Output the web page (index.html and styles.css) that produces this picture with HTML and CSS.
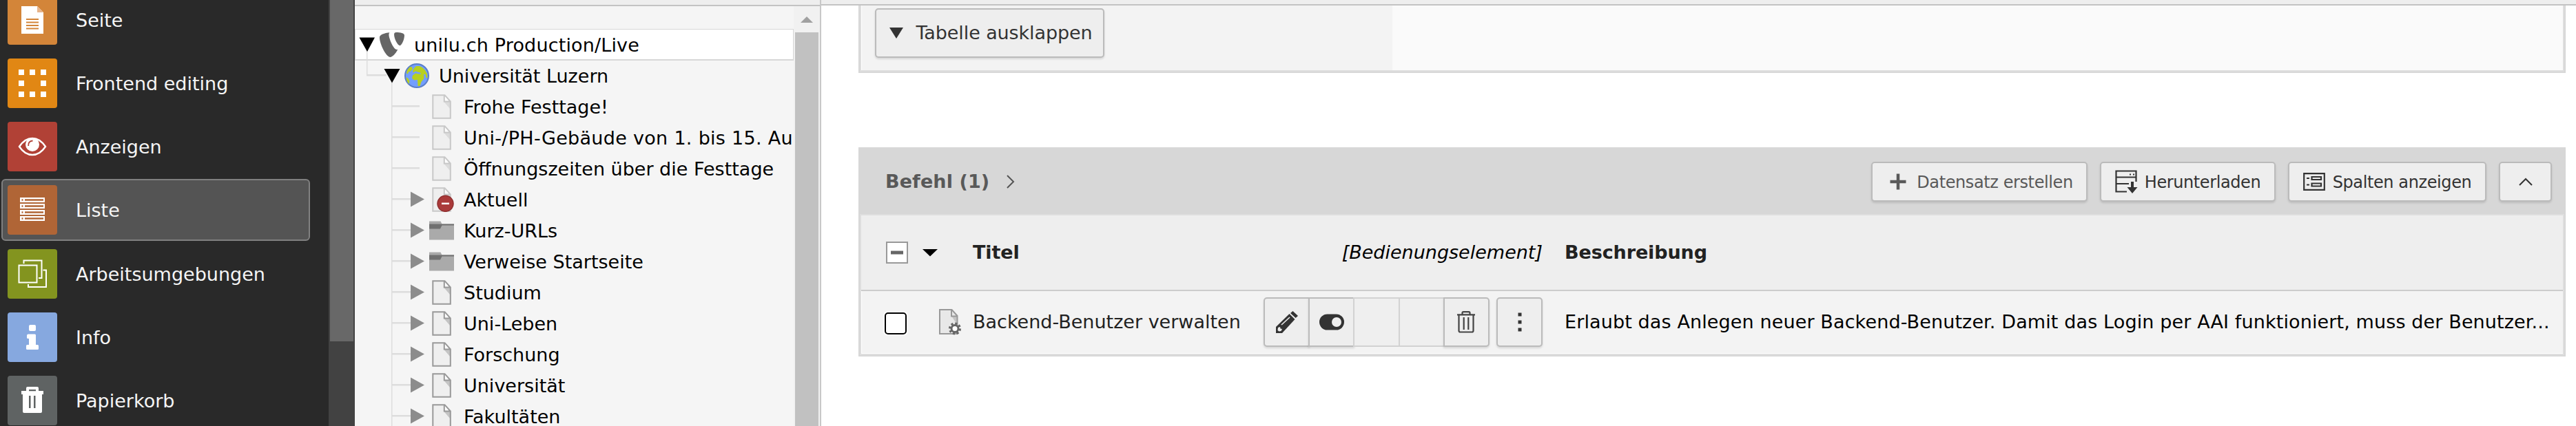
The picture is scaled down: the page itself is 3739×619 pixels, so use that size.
FILE: index.html
```html
<!DOCTYPE html>
<html lang="de">
<head>
    <meta charset="utf-8">
    <title>unilu.ch Production/Live</title>
    <link rel="stylesheet" href="styles.css">
</head>
<body>
    <!-- Icons -->
    <svg class="sprite" aria-hidden="true">
        <symbol id="page" viewBox="0 0 36 36">
            <path d="M5 1h17l9 10v24H5z" fill="#efefef"/>
            <path d="M21 10.500h10v11.500z" fill="currentColor" opacity=".5"/>
            <path d="M22 1l9 9.500h-9z" fill="#fff"/>
            <path d="M5.300 1.200H22.500l8.300 9.300v24.200H5.300z M21.800 1.200v9.300h9" fill="none" stroke="currentColor" stroke-width="2"/>
        </symbol>
        <symbol id="folder" viewBox="0 0 36 36">
            <path d="M0 4.500h16.500l2 4H36v23H0z" fill="#aaa"/>
            <path d="M0 8.500h36v2H18.500l-2.500 5H0z" fill="#707070"/>
        </symbol>
        <symbol id="leaf" viewBox="0 0 55 45">
            <path d="M0 0h1.500v45H0zM0 21h41v2.500H0z" fill="#ddd"/>
        </symbol>
        <symbol id="closed" viewBox="0 0 55 45">
            <path d="M0 0h1.500v45H0zM0 21h30v2.500H0z" fill="#ddd"/>
            <path d="M28 11.500l20 11-20 11z" fill="#8c8c8c"/>
        </symbol>
        <symbol id="trash" viewBox="0 0 26 32">
            <path d="M0 5.300h26M7.500 5V2.800q0-1.600 1.600-1.600h7.800q1.600 0 1.600 1.600V5M2.500 6v22.500q0 2 2 2h17q2 0 2-2V6M9.700 9v18M16.300 9v18" fill="none" stroke="#444" stroke-width="2.200"/>
        </symbol>
    </svg>

    <div class="app">
        <!-- Modulmenü -->
        <nav class="menu">
            <ul class="menu-list">
                <li class="menu-item">
                    <svg class="menu-icon" viewBox="0 0 72 72"><rect width="72" height="72" rx="4" fill="#d38539"/><path d="M20 16h23l9 9v31H20z" fill="#fff"/><path d="M43 16l9 9h-9z" fill="#e7b48a"/><path d="M27 35h18M27 39.500h18M27 44h18M27 48.500h18" stroke="#d38539" stroke-width="2"/></svg>
                    <span>Seite</span>
                </li>
                <li class="menu-item">
                    <svg class="menu-icon" viewBox="0 0 72 72"><rect width="72" height="72" rx="4" fill="#e18714"/><path d="M16 16h8v8h-8zM32 16h8v8h-8zM48 16h8v8h-8zM16 32h8v8h-8zM48 32h8v8h-8zM16 48h8v8h-8zM32 48h8v8h-8zM48 48h8v8h-8z" fill="#fff"/></svg>
                    <span>Frontend editing</span>
                </li>
                <li class="menu-item">
                    <svg class="menu-icon" viewBox="0 0 72 72"><rect width="72" height="72" rx="4" fill="#b14136"/><path d="M17 36Q25 24 36 24T55 36Q47 48 36 48T17 36z" fill="none" stroke="#fff" stroke-width="2.400"/><circle cx="36" cy="33" r="10" fill="#fff"/><path d="M30.200 35q-.5-7 6.300-7.500" fill="none" stroke="#b14136" stroke-width="1.800"/></svg>
                    <span>Anzeigen</span>
                </li>
                <li class="menu-item active">
                    <svg class="menu-icon" viewBox="0 0 72 72"><rect width="72" height="72" rx="4" fill="#b06536"/><path d="M18 18h36v7H18zM18 27h36v7H18zM18 36h36v7H18zM18 45h36v7H18z" fill="#fff"/><path d="M20.500 21.500h2M25 21.500h27M20.500 30.500h2M25 30.500h27M20.500 39.500h2M25 39.500h27M20.500 48.500h2M25 48.500h27" stroke="#b06536" stroke-width="2.300"/></svg>
                    <span>Liste</span>
                </li>
                <li class="menu-item">
                    <svg class="menu-icon" viewBox="0 0 72 72"><rect width="72" height="72" rx="4" fill="#83941f"/><path d="M16.500 23.500h26v25h-26zM23.500 21v-4.500h26v25.500H45M51.500 30.500h4.500V55H30v-4" fill="none" stroke="#fff" stroke-width="2"/></svg>
                    <span>Arbeitsumgebungen</span>
                </li>
                <li class="menu-item">
                    <svg class="menu-icon" viewBox="0 0 72 72"><rect width="72" height="72" rx="4" fill="#86a8df"/><rect x="31" y="18" width="10" height="9" rx="2" fill="#fff"/><path d="M30 31.500h9.500q1.500 0 1.500 1.500v14h2.500q1.500 0 1.500 1.500v4q0 1.500-1.500 1.500h-15q-1.500 0-1.500-1.500v-4q0-1.500 1.500-1.500H31v-9h-1.500q-1.500 0-1.500-1.500V33.500q0-2 2-2z" fill="#fff"/></svg>
                    <span>Info</span>
                </li>
                <li class="menu-item">
                    <svg class="menu-icon" viewBox="0 0 72 72"><rect width="72" height="72" rx="4" fill="#5f6363"/><path d="M27 22v-4q0-2 2-2h14q2 0 2 2v4h7v5h-2v25q0 2-2 2H24q-2 0-2-2V27h-2v-5z" fill="#fff"/><path d="M31 20h10v2.300H31zM31 29h2.500v18H31zM38 29h2.500v18H38z" fill="#5f6363"/></svg>
                    <span>Papierkorb</span>
                </li>
            </ul>
            <div class="menu-scroll"><div class="menu-thumb"></div></div>
        </nav>

        <!-- Seitenbaum -->
        <aside class="tree">
            <div class="tree-toolbar"></div>
            <div class="tree-body">
                <div class="tree-list">
                    <div class="node root">
                        <svg width="36" height="45" viewBox="0 0 36 45"><path d="M17 30h1.500v15H17z" fill="#ddd"/><path d="M6.500 12.500H29L18 33z"/></svg>
                        <svg class="node-icon" viewBox=".7 .5 14.200 14.200" preserveAspectRatio="none"><path fill="#666" d="M11.100 10.300c-.2 0-.4.1-.6.1-1.800 0-4.500-6.400-4.500-8.500 0-.8.2-1 .4-1.300C4.200.8 1.800 1.500 1 2.500c-.2.3-.3.6-.3 1.100 0 3.400 3.600 11.100 6.100 11.100 1.200 0 3.100-1.900 4.300-4.400M10.200.5c2.300 0 4.700.4 4.700 1.700 0 2.700-1.700 5.900-2.500 5.900-1.500 0-3.400-4.200-3.400-6.300 0-1 .4-1.300 1.200-1.300"/></svg>
                        <span>unilu.ch Production/Live</span>
                    </div>
                    <div class="node">
                        <svg width="72" height="45" viewBox="0 0 72 45"><path d="M17 0h1.500v21H46v2.500H17zM53 30h1.500v15H53z" fill="#ddd"/><path d="M42.500 13H65.500L54 33.500z"/></svg>
                        <svg class="node-icon" viewBox="0 0 36 36"><circle cx="18" cy="18" r="17" fill="#739eff" stroke="#5b7fc9" stroke-width="2"/><path d="M4 10l4-5 3 .5 1 3-3 3-3 1-1 3-2-1zM2.500 20l3 2 2 4-1 4q-3.500-4-4-10zM14 7l3-3 5 0 4 2 4 4 3 5 .5 6-2 0-1-5-2.500 0 .5 6-4 5-2 6-3 0-.5-9-5 .5-3-3 1-4 4-3 5 1 3 0-1-2-4-1-3-1-3 2-1-2z" fill="#b8d020"/></svg>
                        <span>Universität Luzern</span>
                    </div>
                    <div class="node child hidden"><svg class="line"><use href="#leaf"/></svg><svg class="node-icon"><use href="#page"/></svg><span>Frohe Festtage!</span></div>
                    <div class="node child hidden wide"><svg class="line"><use href="#leaf"/></svg><svg class="node-icon"><use href="#page"/></svg><span>Uni-/PH-Gebäude von 1. bis 15. Au</span></div>
                    <div class="node child hidden"><svg class="line"><use href="#leaf"/></svg><svg class="node-icon"><use href="#page"/></svg><span>Öffnungszeiten über die Festtage</span></div>
                    <div class="node child hidden"><svg class="line"><use href="#closed"/></svg><svg class="node-icon"><use href="#page"/><circle cx="23.500" cy="23.800" r="11.500" fill="#aa3a3a" stroke="#8f3030" stroke-width="1.500"/><path d="M18 23.800h11" stroke="#fff" stroke-width="2.500"/></svg><span>Aktuell</span></div>
                    <div class="node child"><svg class="line"><use href="#closed"/></svg><svg class="node-icon"><use href="#folder"/></svg><span>Kurz-URLs</span></div>
                    <div class="node child"><svg class="line"><use href="#closed"/></svg><svg class="node-icon"><use href="#folder"/></svg><span>Verweise Startseite</span></div>
                    <div class="node child"><svg class="line"><use href="#closed"/></svg><svg class="node-icon"><use href="#page"/></svg><span>Studium</span></div>
                    <div class="node child"><svg class="line"><use href="#closed"/></svg><svg class="node-icon"><use href="#page"/></svg><span>Uni-Leben</span></div>
                    <div class="node child"><svg class="line"><use href="#closed"/></svg><svg class="node-icon"><use href="#page"/></svg><span>Forschung</span></div>
                    <div class="node child"><svg class="line"><use href="#closed"/></svg><svg class="node-icon"><use href="#page"/></svg><span>Universität</span></div>
                    <div class="node child"><svg class="line"><use href="#closed"/></svg><svg class="node-icon"><use href="#page"/></svg><span>Fakultäten</span></div>
                </div>
                <div class="tree-scroll">
                    <svg width="38" height="38" viewBox="0 0 38 38"><path d="M19 15l9 9H10z" fill="#a0a0a0"/></svg>
                    <div class="tree-thumb"></div>
                </div>
            </div>
        </aside>

        <!-- Listenmodul -->
        <main class="content">
            <div class="docheader"></div>

            <div class="panel panel-top">
                <div class="cell-expand">
                    <button class="btn btn-expand"><svg width="20" height="16" viewBox="0 0 20 16"><path d="M0 0h20L10 16z" fill="#333"/></svg>Tabelle ausklappen</button>
                </div>
            </div>

            <div class="panel panel-list">
                <div class="panel-heading">
                    <h2>Befehl (1)</h2>
                    <svg class="heading-arrow" width="12" height="20" viewBox="0 0 12 20"><path d="M1 1l9 9-9 9" fill="none" stroke="#555" stroke-width="2"/></svg>
                    <div class="actions">
                        <button class="btn btn-new"><svg width="24" height="24" viewBox="0 0 24 24"><path d="M12 .5v23M.5 12h23" stroke="#595959" stroke-width="4.500"/></svg><span>Datensatz erstellen</span></button>
                        <button class="btn btn-download"><svg width="34" height="34" viewBox="0 0 34 34"><path d="M17 31.500H1.500V1.500h29V17M1.500 10.500h29M1.500 20H20M21 6.500h2M26 6.500h2" fill="none" stroke="#333" stroke-width="2.200"/><path d="M23 17h4v8h5.500L25 34l-7.500-9H23z" fill="#333"/></svg><span>Herunterladen</span></button>
                        <button class="btn btn-columns"><svg width="32" height="26" viewBox="0 0 32 26"><path d="M1.200 1.200h29.600v23.600H1.200zM12.500 6h13.500v4H12.500zM12.500 15.500h13.500v4H12.500zM5 8h4M5 17.500h4" fill="none" stroke="#333" stroke-width="2.200"/></svg><span>Spalten anzeigen</span></button>
                        <button class="btn btn-collapse"><svg width="20" height="12" viewBox="0 0 20 12"><path d="M1 11l9-9 9 9" fill="none" stroke="#333" stroke-width="2"/></svg></button>
                    </div>
                </div>

                <div class="table">
                    <div class="row row-head">
                        <div class="col-select">
                            <svg width="75" height="32" viewBox="0 0 75 32"><rect x="1" y="1" width="30" height="30" fill="#fff" stroke="#999" stroke-width="2"/><path d="M7 16h18" stroke="#666" stroke-width="5"/><path d="M53 11h22L64 21.500z"/></svg>
                        </div>
                        <div class="col-title"><b>Titel</b><i>[Bedienungselement]</i></div>
                        <div class="col-text"><b>Beschreibung</b></div>
                    </div>
                    <div class="row row-record">
                        <div class="col-select">
                            <span class="checkbox"></span>
                            <svg width="34" height="38" viewBox="0 0 34 38"><path d="M1 1h18l8 9v26H1z" fill="#e8e8e8"/><path d="M18 10h9v14z" fill="#c4c4c4"/><path d="M1 1h17.500l8 9v26H1zM18 1v9.500h8.500" fill="none" stroke="#999" stroke-width="2"/><circle cx="23" cy="28.500" r="7.300" fill="none" stroke="#666" stroke-width="3.500" stroke-dasharray="3 2.730"/><circle cx="23" cy="28.500" r="5" fill="#fff" stroke="#666" stroke-width="3"/></svg>
                        </div>
                        <div class="col-title">
                            <span class="record-title">Backend-Benutzer verwalten</span>
                            <div class="controls">
                                <div class="btn-group">
                                    <button class="btn"><svg width="32" height="32" viewBox="0 0 32 32"><path d="M0 32v-9L19.500 4l8 8L9 32z" fill="#333"/><path d="M24.500 0L32 7l-3.500 3L21 3z" fill="#333"/><path d="M8 20L20 9" stroke="#eee" stroke-width="1.600"/><path d="M3 24l3-1 .5 2.500 2.500.5-1.500 3-3 .5L2.500 28z" fill="#eee"/></svg></button>
                                    <button class="btn"><svg width="36" height="24" viewBox="0 0 36 24"><rect y="0.500" width="36" height="23" rx="11.500" fill="#333"/><circle cx="25" cy="12" r="7" fill="#eee"/></svg></button>
                                    <span class="btn empty"></span>
                                    <span class="btn empty"></span>
                                    <button class="btn last"><svg width="26" height="32"><use href="#trash"/></svg></button>
                                </div>
                                <button class="btn more"><svg width="6" height="28" viewBox="0 0 6 28"><path d="M.5.5h5v5h-5zM.5 11.500h5v5h-5zM.5 22.500h5v5h-5z" fill="#333"/></svg></button>
                            </div>
                        </div>
                        <div class="col-text">Erlaubt das Anlegen neuer Backend-Benutzer. Damit das Login per AAI funktioniert, muss der Benutzer...</div>
                    </div>
                </div>
            </div>
        </main>
    </div>
</body>
</html>
```
FILE: styles.css
```css
* {
    box-sizing: border-box;
}

body {
    margin: 0;
    font-family: Verdana, "DejaVu Sans", sans-serif;
    font-size: 27px;
    line-height: 36px;
    color: #000;
    background: #fff;
    overflow: hidden;
}

svg {
    display: block;
    flex: none;
}

.sprite {
    display: none;
}

.app {
    display: flex;
    height: 619px;
    overflow: hidden;
}

/* ===== Modulmenü ===== */
.menu {
    display: flex;
    flex: none;
    width: 515px;
    background: #292929;
}

.menu-list {
    flex: 1;
    margin: -16px 0 0;
    padding: 0 27px 0 2px;
    list-style: none;
}

.menu-item {
    display: flex;
    align-items: center;
    height: 90px;
    margin-bottom: 2.150px;
    padding-left: 7px;
    border: 2px solid transparent;
    border-radius: 6px;
    color: #f5f5f5;
}

.menu-item span {
    padding-top: 2px;
}

.menu-item.active {
    background: #545454;
    border-color: #808080;
}

.menu-icon {
    width: 72px;
    height: 72px;
    margin-right: 27px;
}

.menu-scroll {
    width: 38px;
    padding: 0 2px;
    background: #424242;
}

.menu-thumb {
    height: 496px;
    background: #686868;
}

/* ===== Seitenbaum ===== */
.tree {
    flex: none;
    width: 677px;
    border-right: 2px solid #c8c8c8;
    background: #f5f5f5;
}

.tree-toolbar {
    height: 9px;
    background: #eee;
    border-bottom: 2px solid #c3c3c3;
}

.tree-body {
    display: flex;
    height: 610px;
}

.tree-list {
    flex: 1;
    min-width: 0;
    padding-top: 33px;
    overflow: hidden;
}

.node {
    display: flex;
    align-items: center;
    height: 45px;
    white-space: nowrap;
}

.node span {
    padding-top: 3px;
    line-height: 32px;
}

.node.root {
    background: #fff;
    box-shadow: inset 1px 1px #d7d7d7, inset -1px -1px #d7d7d7, 0 1px #d7d7d7;
    letter-spacing: 0.15px;
}

.node.wide {
    letter-spacing: 0.3px;
}

.node.child {
    padding-left: 53px;
}

.line {
    width: 55px;
    height: 45px;
}

.node-icon {
    width: 36px;
    height: 36px;
    margin-right: 14px;
    color: #999;
}

.hidden .node-icon {
    color: #c8c8c8;
}

.tree-scroll {
    width: 38px;
    background: #f1f1f1;
}

.tree-thumb {
    height: 572px;
    margin: 0 2px;
    background: #c1c1c1;
}

/* ===== Inhalt ===== */
.content {
    flex: 1;
}

.docheader {
    height: 8px;
    background: #eee;
    border-bottom: 2px solid #c3c3c3;
}

.panel {
    width: 2478px;
    margin-left: 54px;
    border: 2px solid #d7d7d7;
}

.panel-top {
    height: 98px;
    border-top: 0;
    background: #fafafa;
    box-shadow: inset 2px 0 #dedede, inset -2px -2px #dedede;
}

.cell-expand {
    width: 771px;
    height: 94px;
    margin-left: 2px;
    padding: 4px 0 0 19px;
    border-left: 1px solid #fff;
    background: #f3f3f3;
}

.btn {
    display: flex;
    align-items: center;
    justify-content: center;
    margin: 0;
    padding: 0;
    border: 2px solid #bbb;
    border-radius: 5px;
    background: #eee;
    color: #333;
    font: inherit;
    white-space: nowrap;
    box-shadow: 0 2px 3px rgba(0, 0, 0, 0.12);
}

.btn-expand {
    width: 333px;
    height: 72px;
    padding-left: 4px;
    gap: 18px;
    letter-spacing: -0.1px;
}

.panel-list {
    height: 304px;
    margin-top: 108px;
}

.panel-heading {
    display: flex;
    align-items: center;
    height: 95px;
    padding: 0 18px 0 37px;
    background: #d7d7d7;
    color: #595959;
}

.panel-heading h2 {
    margin: 0 25px 0 0;
    font-size: 27px;
    letter-spacing: 0.1px;
}

.actions {
    display: flex;
    gap: 18px;
    margin-left: auto;
}

.actions .btn {
    height: 58px;
    font-size: 24px;
    letter-spacing: -0.4px;
}

.actions .btn span {
    padding-top: 3px;
}

.actions .btn-new {
    width: 314px;
    gap: 15px;
    padding-left: 6px;
    color: #595959;
}

.btn-download {
    width: 255px;
    gap: 9px;
}

.btn-columns {
    width: 288px;
    gap: 11px;
}

.btn-collapse {
    width: 77px;
}

.table {
    border: 2px solid #dedede;
}

.row {
    display: grid;
    grid-template-columns: 162px 827px 1fr;
    align-items: center;
}

.row-head {
    height: 110px;
    background: #eee;
    border-bottom: 2px solid #ccc;
    color: #222;
}

.row-head b {
    letter-spacing: -0.1px;
}

.row-head i {
    color: #000;
}

.row-record {
    grid-template-columns: 161px 827px 1fr;
    height: 91px;
    border: 0 solid #fff;
    border-width: 0 0 1px 1px;
    background: #f3f3f3;
}

.row-record .col-select {
    padding-left: 33px;
    gap: 47px;
}

.row-record .col-text {
    letter-spacing: 0.12px;
}

.col-select {
    display: flex;
    align-items: center;
    padding-left: 36px;
}

.checkbox {
    width: 32px;
    height: 32px;
    margin-top: 4px;
    border: 2px solid #000;
    border-radius: 5px;
    background: #fff;
    box-shadow: 0 0 0 2px #fff;
}

.col-title {
    display: flex;
    align-items: center;
    justify-content: space-between;
}

.record-title {
    color: #222;
}

.col-text {
    padding-left: 32px;
    white-space: nowrap;
}

.controls {
    display: flex;
    gap: 10px;
}

.btn-group {
    display: flex;
}

.btn-group .btn {
    width: 67.200px;
    height: 72px;
    margin-right: -2px;
    border-radius: 0;
}

.btn-group .btn:first-child {
    border-radius: 5px 0 0 5px;
}

.btn-group .btn.last {
    margin-right: 0;
    border-radius: 0 5px 5px 0;
}

.btn-group .empty {
    border-color: #d2d2d2;
    background: #efefef;
    box-shadow: none;
}

.more {
    width: 67px;
    height: 72px;
}
```
